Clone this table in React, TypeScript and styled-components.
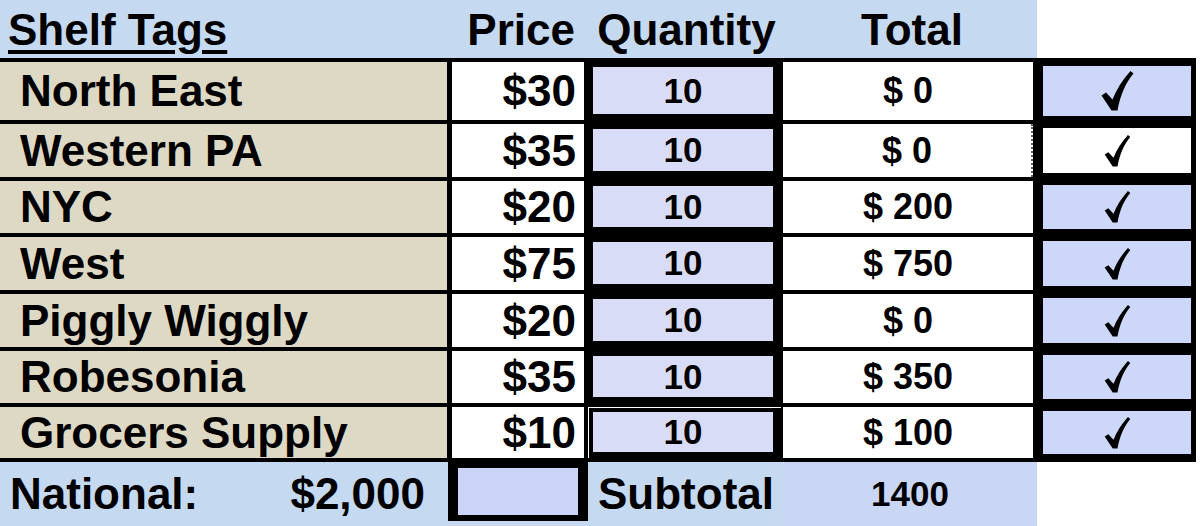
import React from "react";
import styled, {createGlobalStyle} from "styled-components";

const GlobalStyle = createGlobalStyle`
  html, body {
    margin: 0;
    padding: 0;
    background: #fff;
  }

  body {
    font-family: "Liberation Sans", Arial, sans-serif;
    font-weight: bold;
    color: #000;
  }
`

type TagRowType = {
    name: string
    price: number
    qty: number
    total: number
    tinted: boolean
    bigCheck?: boolean
    dotted?: boolean
    doubleRule?: boolean
}

const rows: TagRowType[] = [
    {name: "North East", price: 30, qty: 10, total: 0, tinted: true, bigCheck: true},
    {name: "Western PA", price: 35, qty: 10, total: 0, tinted: false, dotted: true},
    {name: "NYC", price: 20, qty: 10, total: 200, tinted: true},
    {name: "West", price: 75, qty: 10, total: 750, tinted: true},
    {name: "Piggly Wiggly", price: 20, qty: 10, total: 0, tinted: true},
    {name: "Robesonia", price: 35, qty: 10, total: 350, tinted: true},
    {name: "Grocers Supply", price: 10, qty: 10, total: 100, tinted: true, doubleRule: true},
]

const COLS = "452px 132px 199px 250px 163px"

const CheckMark: React.FC<{ big?: boolean }> = ({big}) => (
    <svg width={big ? 33 : 27} height={big ? 40 : 32} viewBox="0 0 32 40">
        <path
            d="M0 24.5 L4.5 21.5 L11 28.5 C15 18 21 9 29 0 L32 2.5 C24.5 11.5 19 23 16 39.5 L10 39.5 Z"
            fill="#000"
        />
    </svg>
)

const App: React.FC = () => {
    return (
        <Sheet>
            <GlobalStyle/>
            <Header>
                <HeadCell $align={"start"} $pad={"0 0 0 8px"}><Underlined>Shelf Tags</Underlined></HeadCell>
                <HeadCell $align={"end"} $pad={"0 9px 0 0"}>Price</HeadCell>
                <HeadCell $align={"center"} $pad={"0 0 0 6px"}>Quantity</HeadCell>
                <HeadCell $align={"center"} $pad={"0 0 0 4px"}>Total</HeadCell>
                <HeadCell $blank/>
            </Header>
            <Body>
                {rows.map(r => (
                    <Row key={r.name}>
                        <NameCell>{r.name}</NameCell>
                        <PriceCell>${r.price}</PriceCell>
                        <QtyCell $double={r.doubleRule}>
                            <QtyBox>{r.qty}</QtyBox>
                        </QtyCell>
                        <TotalCell $dotted={r.dotted}>$ {r.total}</TotalCell>
                        <CheckCell>
                            <CheckBox $tinted={r.tinted}><CheckMark big={r.bigCheck}/></CheckBox>
                        </CheckCell>
                    </Row>
                ))}
            </Body>
            <Footer>
                <FootLabel>
                    <span>National:</span>
                    <span>$2,000</span>
                </FootLabel>
                <FootSlot>
                    <NationalBox/>
                </FootSlot>
                <Subtotal>Subtotal</Subtotal>
                <SubtotalValue>1400</SubtotalValue>
                <div/>
            </Footer>
        </Sheet>
    )
}

const Sheet = styled.div`
  width: 1200px;
  height: 526px;
  overflow: hidden;
  background: #fff;
`

const Header = styled.div`
  display: grid;
  grid-template-columns: 452px 132px 199px 254px 163px;
  height: 58px;
`

const HeadCell = styled.div<{ $align?: string, $pad?: string, $blank?: boolean }>`
  display: flex;
  align-items: center;
  justify-content: ${p => p.$align || "center"};
  padding: ${p => p.$pad || "0"};
  background: ${p => p.$blank ? "#fff" : "#C5D9F1"};
  font-size: 44px;
  line-height: 1;
  padding-top: 2px;
`

const Underlined = styled.span`
  text-decoration: underline;
  text-decoration-thickness: 4px;
  text-underline-offset: 5px;
`

const Body = styled.div`
  display: grid;
  grid-template-rows: 58px 53px 52px 53px 53px 52px 51px;
  row-gap: 4px;
  padding: 4px 0;
  width: 1196px;
  background: #000;
`

const Row = styled.div`
  display: grid;
  grid-template-columns: ${COLS};
`

const NameCell = styled.div`
  display: flex;
  align-items: center;
  padding-left: 20px;
  background: #DDD9C4;
  border-right: 5px solid #000;
  font-size: 44px;
`

const PriceCell = styled.div`
  display: flex;
  align-items: center;
  justify-content: flex-end;
  padding-right: 8px;
  background: #fff;
  font-size: 44px;
`

const QtyCell = styled.div<{ $double?: boolean }>`
  display: flex;
  padding: 5px 10px 6px 9px;
  background: ${p => p.$double
          ? "linear-gradient(#fff, #fff) 4px 0 / calc(100% - 6px) 1px no-repeat, linear-gradient(#fff, #fff) 4px 0 / 1px 100% no-repeat, #000"
          : "#000"};
`

const QtyBox = styled.div`
  flex: 1;
  display: flex;
  align-items: center;
  justify-content: center;
  background: #D9DCF6;
  font-size: 35px;
`

const TotalCell = styled.div<{ $dotted?: boolean }>`
  display: flex;
  align-items: center;
  justify-content: center;
  background: #fff;
  font-size: 36px;
  border-right: ${p => p.$dotted ? "2px dotted #666" : "none"};
`

const CheckCell = styled.div`
  display: flex;
  padding: 4px 5px 4px 10px;
  background: #000;
`

const CheckBox = styled.div<{ $tinted: boolean }>`
  flex: 1;
  display: flex;
  align-items: center;
  justify-content: center;
  background: ${p => p.$tinted ? "#CCD7FA" : "#fff"};
`

const Footer = styled.div`
  display: grid;
  grid-template-columns: 448px 140px 195px 254px 1fr;
  height: 64px;
`

const FootLabel = styled.div`
  display: flex;
  align-items: center;
  justify-content: space-between;
  padding: 0 23px 0 10px;
  background: #C5D9F1;
  font-size: 44px;
`

const FootSlot = styled.div`
  display: flex;
  padding-bottom: 5px;
  background: #C5D9F1;
`

const NationalBox = styled.div`
  flex: 1;
  border-style: solid;
  border-color: #000;
  border-width: 6px 10px 6px 10px;
  background: #CAD4F8;
`

const Subtotal = styled.div`
  display: flex;
  align-items: center;
  padding-left: 10px;
  background: #C5D9F1;
  font-size: 44px;
`

const SubtotalValue = styled.div`
  display: flex;
  align-items: center;
  justify-content: center;
  background: #C9D7F5;
  font-size: 35px;
`

export default App;
